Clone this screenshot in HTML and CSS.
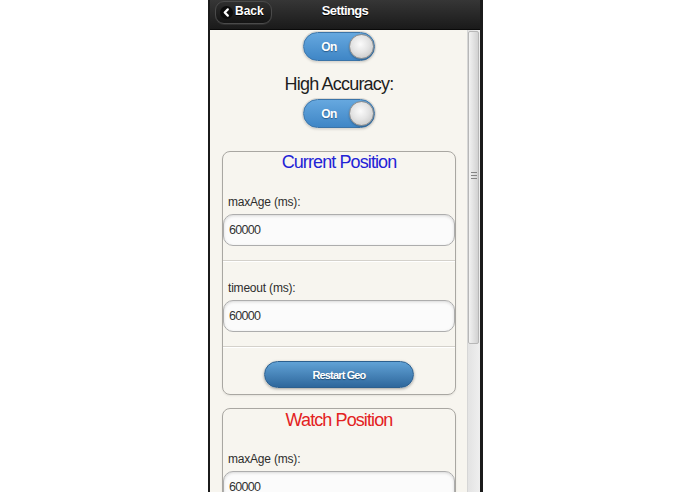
FILE: index.html
```html
<!DOCTYPE html>
<html lang="en">
<head>
<meta charset="utf-8">
<title>Settings</title>
<link rel="stylesheet" href="styles.css">
</head>
<body>
<div class="stage">
  <div class="phone">
    <header class="bar">
      <a class="back" href="#">
        <span class="back-ico"><svg width="13" height="13" viewBox="0 0 13 13"><path d="M7.8 3.4 L4.7 6.5 L7.8 9.6" fill="none" stroke="#fff" stroke-width="2.2" stroke-linecap="round" stroke-linejoin="round"/></svg></span>
        <span class="back-text">Back</span>
      </a>
      <h1 class="title">Settings</h1>
    </header>
    <div class="viewport">
      <main class="content">
        <div class="switch"><span class="switch-label">On</span><span class="knob"></span></div>
        <p class="caption">High Accuracy:</p>
        <div class="switch"><span class="switch-label">On</span><span class="knob"></span></div>

        <section class="panel">
          <h2 class="panel-title blue">Current Position</h2>
          <div class="field">
            <label class="field-label">maxAge (ms):</label>
            <input class="text-input" type="text" value="60000" readonly>
          </div>
          <div class="field">
            <label class="field-label">timeout (ms):</label>
            <input class="text-input" type="text" value="60000" readonly>
          </div>
          <div class="actions"><button class="btn" type="button">Restart Geo</button></div>
        </section>

        <section class="panel panel-second">
          <h2 class="panel-title second-title red">Watch Position</h2>
          <div class="field">
            <label class="field-label">maxAge (ms):</label>
            <input class="text-input" type="text" value="60000" readonly>
          </div>
        </section>
      </main>
      <div class="scrollbar"><div class="thumb"><span class="grip"></span></div></div>
    </div>
  </div>
</div>
</body>
</html>
```

FILE: styles.css
```css
html, body {
  margin: 0;
  padding: 0;
  background: #fff;
}
body {
  font-family: "Liberation Sans", Arial, sans-serif;
  overflow: hidden;
}
.stage {
  padding-left: 208px;
}
.phone {
  width: 270px;
  height: 492px;
  border-left: 2px solid #1b1b1b;
  border-right: 3px solid #1b1b1b;
  background: #f7f5ef;
  display: flex;
  flex-direction: column;
  overflow: hidden;
}

/* header */
.bar {
  box-sizing: border-box;
  height: 30px;
  flex-shrink: 0;
  padding-top: 1px;
  border-bottom: 1px solid #0a0a0a;
  background: linear-gradient(#363636, #1a1a1a);
  display: grid;
  grid-template-columns: 1fr auto 1fr;
  align-items: start;
}
.back {
  justify-self: start;
  margin-left: 5px;
  display: flex;
  align-items: center;
  height: 18px;
  padding: 0 7px 3px 4px;
  border: 1px solid #4a4a4a;
  border-radius: 9px;
  background: linear-gradient(#2e2e2e, #141414);
  box-shadow: 0 1px 0 rgba(255,255,255,.08);
  color: #fff;
  text-decoration: none;
  font-weight: bold;
  font-size: 12px;
  line-height: 18px;
  text-shadow: 0 1px 0 #000;
}
.back-ico {
  display: flex;
  width: 13px;
  height: 13px;
  margin: 3px 2px 0 0;
  border-radius: 50%;
  background: #0c0c0c;
}
.title {
  margin: 0;
  color: #fff;
  font-size: 13px;
  font-weight: bold;
  letter-spacing: -0.6px;
  line-height: 20px;
  text-shadow: 0 1px 0 #000;
}

/* body */
.viewport {
  flex: 1;
  min-height: 0;
  display: flex;
}
.content {
  flex: 1;
  min-width: 0;
  padding: 2px 11px 0 12px;
  display: flex;
  flex-direction: column;
  align-items: center;
  overflow: hidden;
}

.switch {
  box-sizing: border-box;
  flex-shrink: 0;
  width: 72px;
  height: 29px;
  border: 1px solid #3b74a8;
  border-radius: 15px;
  background: linear-gradient(#66a8df, #3f86c6);
  box-shadow: 0 0 0 1px #dcd9d3, 0 1px 3px rgba(0,0,0,.2);
  display: flex;
  align-items: center;
}
.switch-label {
  flex: 1;
  padding-left: 5px;
  text-align: center;
  color: #fff;
  font-size: 12px;
  font-weight: bold;
  letter-spacing: -0.5px;
  text-shadow: 0 1px 1px #2a5d8c;
}
.knob {
  box-sizing: border-box;
  width: 25px;
  height: 25px;
  border: 1px solid #8c8c8c;
  border-radius: 50%;
  background: radial-gradient(circle at 45% 40%, #fbfbfb 0%, #e4e4e4 45%, #bdbdbd 100%);
  box-shadow: 0 1px 2px rgba(0,0,0,.25);
}
.caption {
  margin: 11px 0 3px;
  font-size: 18px;
  line-height: 24px;
  letter-spacing: -0.8px;
  color: #1e1e1e;
}

.panel {
  align-self: stretch;
  flex-shrink: 0;
  margin-top: 23px;
  border: 1px solid #a9a7a2;
  border-radius: 8px;
  box-shadow: 0 1px 2px rgba(0,0,0,.08);
}
.panel-second {
  margin-top: 13px;
}
.panel-title {
  margin: 0 0 3px;
  font-size: 18px;
  font-weight: normal;
  line-height: 20px;
  letter-spacing: -0.9px;
  text-align: center;
}
.second-title {
  padding-top: 1px;
  margin-bottom: 2px;
}
.blue { color: #2323d6; }
.red { color: #e32222; }

.field {
  padding: 19px 0 14px;
  border-bottom: 1px solid #d4d1cb;
  box-shadow: 0 1px 0 #fff;
}
.field-label {
  display: block;
  padding-left: 5px;
  font-size: 12px;
  line-height: 16px;
  letter-spacing: -0.2px;
  color: #2d2d2d;
}
.text-input {
  display: block;
  box-sizing: border-box;
  width: 100%;
  height: 32px;
  margin: 4px 0 0;
  padding: 0 5px;
  border: 1px solid #adadad;
  border-radius: 10px;
  background: #fbfbfb;
  box-shadow: inset 0 1px 3px rgba(0,0,0,.14);
  font-family: "Liberation Sans", Arial, sans-serif;
  font-size: 12.5px;
  letter-spacing: -0.7px;
  color: #333;
  outline: none;
}
.actions {
  padding: 14px 0 6px;
  display: flex;
  justify-content: center;
}
.btn {
  box-sizing: border-box;
  width: 150px;
  height: 27px;
  border: 1px solid #2c5f8e;
  border-radius: 14px;
  background: linear-gradient(#61a2d6, #2e679c);
  box-shadow: 0 1px 3px rgba(0,0,0,.35);
  color: #fff;
  font-family: "Liberation Sans", Arial, sans-serif;
  font-size: 11px;
  font-weight: bold;
  letter-spacing: -0.85px;
  text-shadow: 0 1px 1px #1f4b73;
  cursor: pointer;
}

/* scrollbar */
.scrollbar {
  box-sizing: border-box;
  width: 13px;
  flex-shrink: 0;
  border-left: 1px solid #d6d6d6;
  background: linear-gradient(90deg, #e3e3e3, #efefef);
}
.thumb {
  box-sizing: border-box;
  height: 313px;
  margin: 1px 1px 0 0;
  border: 1px solid #b7b7b7;
  border-radius: 2px;
  background: linear-gradient(90deg, #f2f2f2, #d2d2d2);
}
.grip {
  display: block;
  width: 6px;
  height: 1px;
  margin: 140px auto 0;
  background: #858585;
  box-shadow: 0 3px 0 #858585, 0 6px 0 #858585;
}
```
